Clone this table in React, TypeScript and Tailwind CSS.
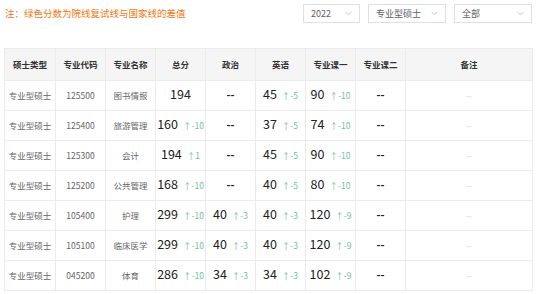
const rows = [
  { code: "125500", name: "图书情报", total: ["194", ""], pol: ["--", ""], eng: ["45", "↑-5"], c1: ["90", "↑-10"] },
  { code: "125400", name: "旅游管理", total: ["160", "↑-10"], pol: ["--", ""], eng: ["37", "↑-5"], c1: ["74", "↑-10"] },
  { code: "125300", name: "会计", total: ["194", "↑1"], pol: ["--", ""], eng: ["45", "↑-5"], c1: ["90", "↑-10"] },
  { code: "125200", name: "公共管理", total: ["168", "↑-10"], pol: ["--", ""], eng: ["40", "↑-5"], c1: ["80", "↑-10"] },
  { code: "105400", name: "护理", total: ["299", "↑-10"], pol: ["40", "↑-3"], eng: ["40", "↑-3"], c1: ["120", "↑-9"] },
  { code: "105100", name: "临床医学", total: ["299", "↑-10"], pol: ["40", "↑-3"], eng: ["40", "↑-3"], c1: ["120", "↑-9"] },
  { code: "045200", name: "体育", total: ["286", "↑-10"], pol: ["34", "↑-3"], eng: ["34", "↑-3"], c1: ["102", "↑-9"] },
];

const headers = ["硕士类型", "专业代码", "专业名称", "总分", "政治", "英语", "专业课一", "专业课二", "备注"];
const widths = [51, 50, 50, 50, 50, 50, 50, 50, 127];

const Chevron = () => (
  <svg width="7" height="5" viewBox="0 0 7 5" fill="none">
    <path d="M0.5 0.8 L3.5 4 L6.5 0.8" stroke="#c0c4cc" strokeWidth="0.9" />
  </svg>
);

const Select = ({ label, w }: { label: string; w: string }) => (
  <div className={`${w} h-[19px] border border-[#dcdfe6] flex items-center justify-between pl-[7px] pr-[7px] text-[9px] leading-none text-[#606266] bg-white`}>
    <span>{label}</span>
    <Chevron />
  </div>
);

const Score = ({ v }: { v: string[] }) => (
  <div className="flex justify-center items-baseline gap-[5px] leading-none pb-[3px]">
    <span className={v[0] === "--" ? "text-[11px] font-bold text-[#222]" : "text-[12.5px] text-[#222]"}>{v[0]}</span>
    {v[1] && <span className="text-[8.5px] text-[#6fbf9f]">{v[1]}</span>}
  </div>
);

const cell = "border border-[#ebebeb] text-center p-0 leading-none";

export default function App() {
  return (
    <div
      className="w-[537px] h-[294px] bg-white overflow-hidden"
      style={{ fontFamily: '"Noto Sans CJK SC", "Noto Sans", sans-serif' }}
    >
      <div className="flex items-center justify-between pl-[5px] pr-[5px] pt-[4px] h-[23px]">
        <div className="text-[9.5px] text-[#f5760f] leading-none">注：绿色分数为院线复试线与国家线的差值</div>
        <div className="flex gap-[8px]">
          <Select label="2022" w="w-[57px]" />
          <Select label="专业型硕士" w="w-[78px]" />
          <Select label="全部" w="w-[78px]" />
        </div>
      </div>
      <table className="ml-[4px] mt-[25px] w-[528px] table-fixed border-collapse">
        <colgroup>
          {widths.map((w, i) => (
            <col key={i} style={{ width: w }} />
          ))}
        </colgroup>
        <thead>
          <tr className="h-[32px] bg-[#f5f5f5]">
            {headers.map((h) => (
              <th key={h} className={`${cell} text-[8.5px] font-bold text-[#333]`}>
                {h}
              </th>
            ))}
          </tr>
        </thead>
        <tbody>
          {rows.map((r) => (
            <tr key={r.code} className="h-[30px]">
              <td className={`${cell} text-[8.5px] text-[#666]`}>专业型硕士</td>
              <td className={`${cell} text-[8.5px] text-[#666]`}>{r.code}</td>
              <td className={`${cell} text-[8.5px] text-[#666]`}>{r.name}</td>
              <td className={cell}><Score v={r.total} /></td>
              <td className={cell}><Score v={r.pol} /></td>
              <td className={cell}><Score v={r.eng} /></td>
              <td className={cell}><Score v={r.c1} /></td>
              <td className={cell}><Score v={["--", ""]} /></td>
              <td className={`${cell} text-[7px] text-[#bbb]`}>--</td>
            </tr>
          ))}
        </tbody>
      </table>
    </div>
  );
}
